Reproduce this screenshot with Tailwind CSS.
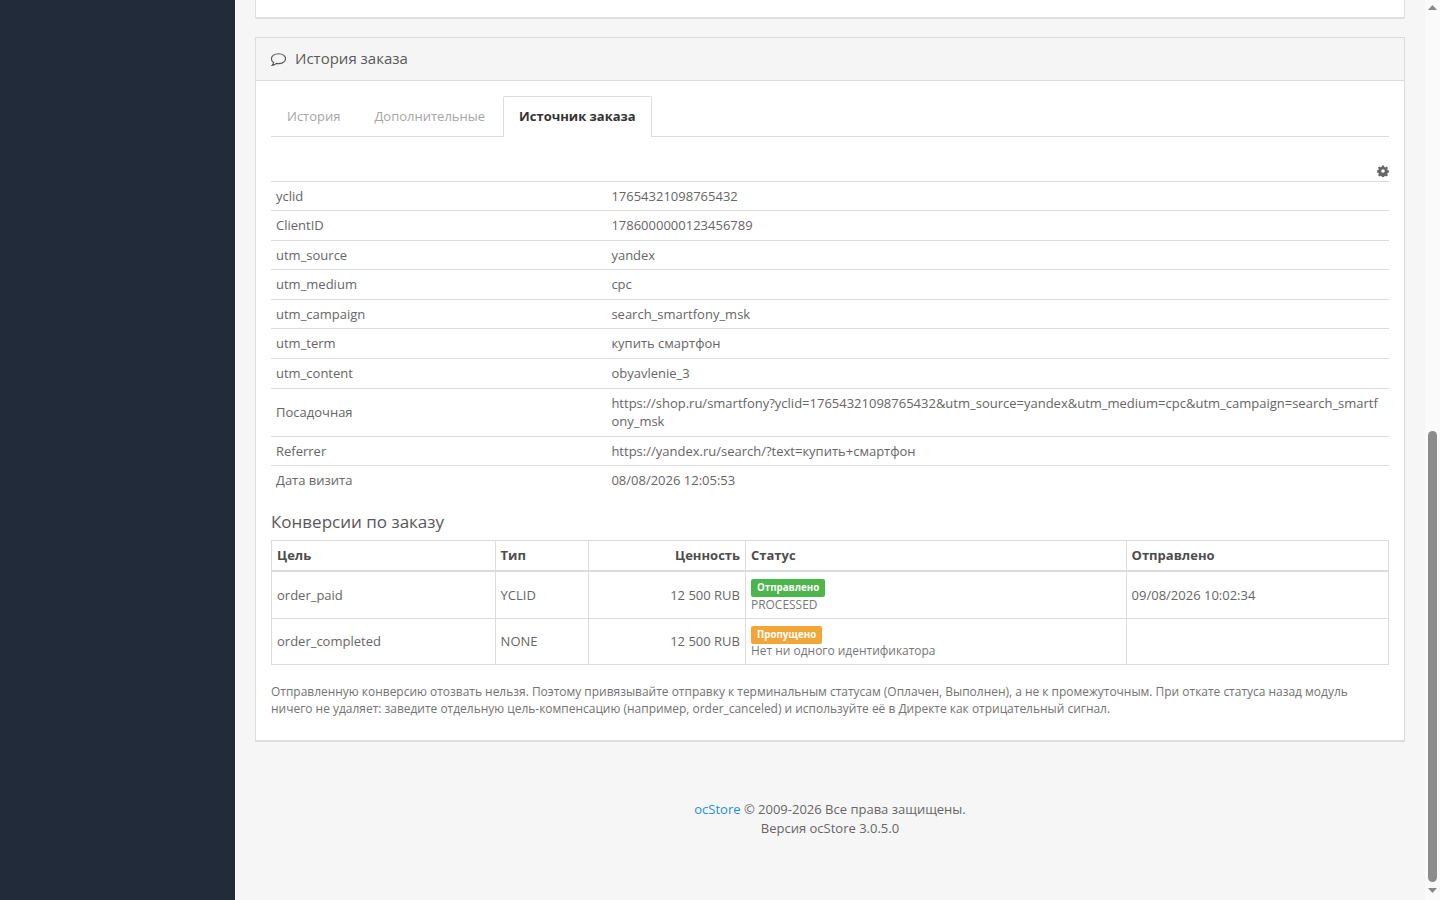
<!DOCTYPE html>
<html lang="ru">
<head>
<meta charset="utf-8">
<title>История заказа</title>
<script src="https://cdn.jsdelivr.net/npm/@tailwindcss/browser@4"></script>
</head>
<body class="h-screen overflow-hidden bg-[#f6f6f6] font-['Open_Sans',sans-serif] text-[13px] leading-[1.42857] text-[#666]">
<div class="flex h-[900px]">
  <aside class="w-[235px] shrink-0 bg-[#212b3a]"></aside>
  <main class="flex-1 min-w-0 pl-5 pr-5">
    <div class="h-[19px] bg-white border-x border-b-2 border-[#e0e0e0]"></div>
    <section class="mt-[18px] bg-white border border-[#dcdcdc] border-b-2 h-[705px]">
      <header class="h-[43px] px-[15px] flex items-center gap-[9px] bg-[#f5f5f5] border-b border-[#dcdcdc] text-[15px] text-[#595959]">
        <svg width="15" height="13" viewBox="1 1 14 11.600" fill="none" stroke="#595959" stroke-width="1.100"><path d="M8 1.400c3.600 0 6.600 2 6.600 4.600S11.600 10.600 8 10.600c-.7 0-1.300-.1-1.900-.2-1 .9-2.300 1.600-4 1.900.7-.8 1.200-1.600 1.300-2.700C2 8.700 1.400 7.400 1.400 6 1.400 3.400 4.400 1.400 8 1.400z"/></svg>
        <span>История заказа</span>
      </header>
      <div class="px-[15px] pt-[15px]">
        <nav class="flex h-[41px] border-b border-[#dcdcdc]">
          <span class="h-10 px-4 flex items-center text-[#a6a6a6]">История</span>
          <span class="h-10 px-[18px] flex items-center text-[#a6a6a6]">Дополнительные</span>
          <span class="h-[41px] px-[15px] pb-[2px] flex items-center font-bold text-[#333] bg-white border border-b-0 border-[#dcdcdc] rounded-t-[2px]">Источник заказа</span>
        </nav>
        <div class="h-[43.600px] flex items-end justify-end pb-[4px]">
          <svg width="12" height="12" viewBox="0 0 12 12" fill="#666"><path fill-rule="evenodd" d="M5 .5h2l.3 1.500 1 .4 1.300-.8 1.400 1.400-.8 1.300.4 1 1.400.3v2l-1.400.3-.4 1 .8 1.300-1.400 1.400-1.300-.8-1 .4-.3 1.400H5l-.3-1.400-1-.4-1.300.8L1 10l.8-1.300-.4-1L0 7.400v-2l1.400-.3.4-1L1 2.800 2.400 1.400l1.300.8 1-.4zM6 4.200a1.800 1.800 0 1 0 0 3.600 1.800 1.800 0 0 0 0-3.600z"/></svg>
        </div>
        <table class="w-full table-fixed border-collapse border-t border-[#dcdcdc]">
          <colgroup><col class="w-[335.400px]"><col></colgroup>
          <tbody class="[&_td]:px-[5px] [&_td]:py-[5px] [&_td]:align-middle [&_tr]:border-b [&_tr]:border-[#dcdcdc] [&_tr:last-child]:border-b-0">
            <tr><td>yclid</td><td>17654321098765432</td></tr>
            <tr><td>ClientID</td><td>1786000000123456789</td></tr>
            <tr><td>utm_source</td><td>yandex</td></tr>
            <tr><td>utm_medium</td><td>cpc</td></tr>
            <tr><td>utm_campaign</td><td>search_smartfony_msk</td></tr>
            <tr><td>utm_term</td><td>купить смартфон</td></tr>
            <tr><td>utm_content</td><td>obyavlenie_3</td></tr>
            <tr><td>Посадочная</td><td class="break-all">https://shop.ru/smartfony?yclid=17654321098765432&amp;utm_source=yandex&amp;utm_medium=cpc&amp;utm_campaign=search_smartfony_msk</td></tr>
            <tr><td>Referrer</td><td>https://yandex.ru/search/?text=купить+смартфон</td></tr>
            <tr><td>Дата визита</td><td>08/08/2026 12:05:53</td></tr>
          </tbody>
        </table>
        <h3 class="mt-[14.400px] mb-[6px] text-[17px] leading-[25px] font-normal text-[#595959]">Конверсии по заказу</h3>
        <table class="w-full table-fixed border-collapse border border-[#dcdcdc]">
          <colgroup><col class="w-[223.600px]"><col class="w-[93.400px]"><col class="w-[157px]"><col class="w-[380.600px]"><col></colgroup>
          <thead class="text-[#4d4d4d]">
            <tr class="h-[30px] border-b-2 border-[#dcdcdc] [&_th]:px-[5px] [&_th]:border-r [&_th]:border-[#dcdcdc] [&_th]:font-bold">
              <th class="text-left">Цель</th><th class="text-left">Тип</th><th class="text-right">Ценность</th><th class="text-left">Статус</th><th class="text-left">Отправлено</th>
            </tr>
          </thead>
          <tbody class="[&_td]:px-[5px] [&_td]:border-r [&_td]:border-[#dcdcdc]">
            <tr class="h-[48px] border-b border-[#dcdcdc]">
              <td>order_paid</td><td>YCLID</td><td class="text-right">12 500 RUB</td>
              <td>
                <span class="block h-[18px] w-fit px-[6px] rounded-[2px] bg-[#4cb64c] text-white text-[9.750px] font-bold leading-[17px]">Отправлено</span>
                <span class="block text-[11.960px] leading-[14px] pt-[1px] -mb-[1px] text-[#777]">PROCESSED</span>
              </td>
              <td>09/08/2026 10:02:34</td>
            </tr>
            <tr class="h-[46px]">
              <td>order_completed</td><td>NONE</td><td class="text-right">12 500 RUB</td>
              <td>
                <span class="block h-[18px] w-fit px-[6px] rounded-[2px] bg-[#f3a638] text-white text-[9.750px] font-bold leading-[17px]">Пропущено</span>
                <span class="block text-[11.960px] leading-[14px] text-[#777]">Нет ни одного идентификатора</span>
              </td>
              <td></td>
            </tr>
          </tbody>
        </table>
        <p class="mt-[18px] text-[11.960px] leading-[17px] text-[#737373]">Отправленную конверсию отозвать нельзя. Поэтому привязывайте отправку к терминальным статусам (Оплачен, Выполнен), а не к промежуточным. При откате статуса назад модуль ничего не удаляет: заведите отдельную цель-компенсацию (например, order_canceled) и используйте её в Директе как отрицательный сигнал.</p>
      </div>
    </section>
    <footer class="mt-[58px] text-center leading-[19px] text-[#666]">
      <a class="text-[#1e91cf]" href="#">ocStore</a> © 2009-2026 Все права защищены.<br>Версия ocStore 3.0.5.0
    </footer>
  </main>
  <div class="relative w-[15px] shrink-0 bg-[#fafafa]">
    <svg class="absolute left-[3px] top-[5px]" width="9" height="6" viewBox="0 0 9 6" fill="#8a8a8a"><path d="M4.500 0 9 5H0z"/></svg>
    <div class="absolute left-[3px] top-[431px] h-[451px] w-[9px] rounded-full bg-[#8c8c8c]"></div>
    <svg class="absolute left-[3px] top-[888px]" width="9" height="6" viewBox="0 0 9 6" fill="#8a8a8a"><path d="M0 0h9L4.500 5z"/></svg>
  </div>
</div>
</body>
</html>
